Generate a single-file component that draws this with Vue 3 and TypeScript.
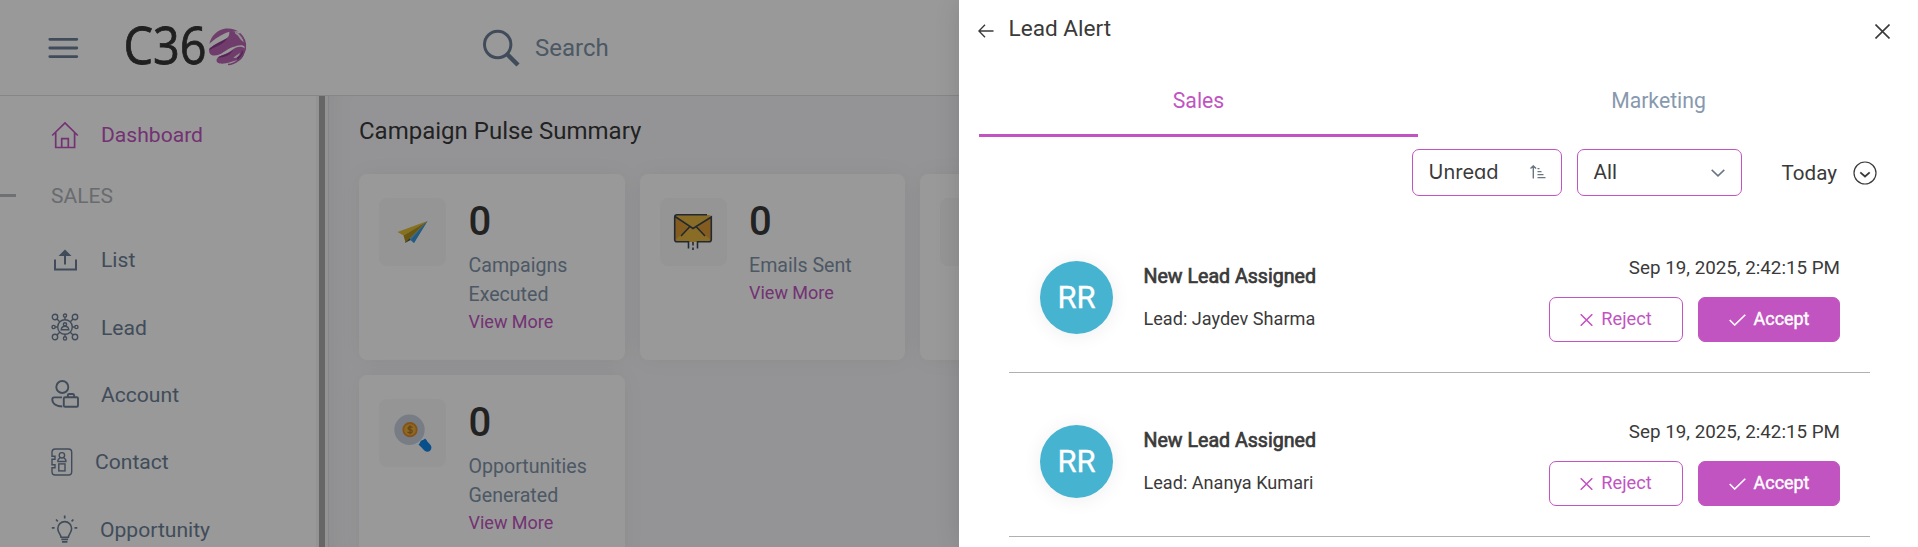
<script setup lang="ts">
interface NavItem {
  label: string
  icon: string
  width: number
}

interface Lead {
  initials: string
  name: string
  time: string
}

const navItems: NavItem[] = [
  { label: 'List', icon: 'list', width: 28 },
  { label: 'Lead', icon: 'lead', width: 28 },
  { label: 'Account', icon: 'account', width: 28 },
  { label: 'Contact', icon: 'contact', width: 22 },
  { label: 'Opportunity', icon: 'opportunity', width: 27 },
]

const cards = [
  { icon: 'plane', label: 'Campaigns Executed' },
  { icon: 'mail', label: 'Emails Sent' },
  { icon: '', label: '' },
  { icon: 'coin', label: 'Opportunities Generated' },
]

const leads: Lead[] = [
  { initials: 'RR', name: 'Jaydev Sharma', time: 'Sep 19, 2025, 2:42:15 PM' },
  { initials: 'RR', name: 'Ananya Kumari', time: 'Sep 19, 2025, 2:42:15 PM' },
]
</script>

<template>
  <div class="app">
    <header class="topbar">
      <svg class="burger" width="31" height="22" viewBox="0 0 31 22">
        <path d="M1.8 2.3H28.8M1.8 11H28.8M1.8 19.6H28.8" />
      </svg>
      <svg class="logo" width="128" height="80" viewBox="-4 -18 128 80">
        <text x="-1.500" y="39" textLength="83" lengthAdjust="spacingAndGlyphs">C36</text>
        <g transform="translate(84 3.300)">
          <path fill="#bb68b3" d="M.4 15.500C2 8 8.500 1.300 16.500.3 22-.4 27 1.500 29.500 3.200 24.500 2.600 20 3 15.500 5.200 9 8.300 4 12 .4 15.500Z" />
          <path fill="#b965b2" d="M0 21.500C5 15 12 13.500 18 9.600 21 7.500 20 5 20.500 3 28 1.500 36.600 9 36.800 19 33 15.500 29 17 24 18.700 16.500 21.200 13 27 5 27.300 1.500 27.200 0 25 0 21.500Z" />
          <path fill="#8a3f91" d="M.5 20C6 15.500 12 13.800 18.500 9.600 15 16 7 17.500.5 22Z" />
          <path fill="#b965b2" d="M7.500 31.500C9 27 17 27 23.500 21.500 27.500 18 33 17.500 36 20.500 36 25 33.500 30 29.500 32.500 27.500 30.500 23 34 17 35 11 36 7.300 35 7.500 31.500Z" />
          <path fill="#8a3f91" d="M8.500 29.200C13 26.500 19 26 24.500 21.500 21 27.500 15 29.500 8.500 29.200ZM28 29C31 28 33 25 33 22L35 25C34.500 28.500 32 31.500 29 33Z" />
          <path fill="#f6f0f6" d="M26 5 29 7.500C31 11 33 13 35 14 33.500 9 30 5 26 3.500ZM24.500 29.500C26 27.500 29 26.500 31 24.500 30 28.500 27 30.500 24.500 29.500Z" />
          <path fill="none" stroke="#b965b2" stroke-width="1.500" d="M19 36.300C26 36 34 30 36.300 20.500C37 15 35 9 30.500 5" />
        </g>
      </svg>
      <div class="search">
        <svg width="38" height="38" viewBox="0 0 38 38">
          <circle cx="15.700" cy="15.500" r="13.200" fill="none" stroke="#6d7f97" stroke-width="3" />
          <path d="M24.500 24.500 36 36" fill="none" stroke="#6d7f97" stroke-width="4.500" />
        </svg>
        <span>Search</span>
      </div>
    </header>

    <div class="body">
      <aside class="sidebar">
        <nav>
          <a class="nav-item active">
            <svg width="28" height="28" viewBox="0 0 28 28">
              <path d="M1.200 14.500 14 1.900 26.800 14.500M4.700 11.500V26.500H23.600V11.500M10.700 26.500V17.700H17.300V26.500" stroke-width="1.700" />
            </svg>
            <span>Dashboard</span>
          </a>
          <div class="section">SALES</div>
          <a v-for="item in navItems" :key="item.label" class="nav-item">
            <svg :width="item.width" height="28" :viewBox="`0 0 ${item.width} 28`">
              <template v-if="item.icon === 'list'">
                <path d="M4 13.500V23.500H25V13.500" stroke-width="2" />
                <path d="M14 18.500V8" stroke-width="2" />
                <path d="M14 3.500 20.500 10H7.500Z" class="solid" />
              </template>
              <template v-else-if="item.icon === 'lead'">
                <g stroke-width="1.400">
                  <circle cx="14" cy="14" r="7.300" />
                  <circle cx="14" cy="11.300" r="1.600" />
                  <path d="M10.200 16.700C10.500 14.400 12 13.300 14 13.300S17.500 14.400 17.800 16.700Z" />
                  <circle cx="4" cy="4" r="2.700" />
                  <circle cx="24" cy="4" r="2.700" />
                  <circle cx="4" cy="24" r="2.700" />
                  <circle cx="24" cy="24" r="2.700" />
                  <circle cx="14" cy="2.600" r="1.600" />
                  <circle cx="14" cy="25.400" r="1.600" />
                  <circle cx="2.600" cy="14" r="1.600" />
                  <circle cx="25.400" cy="14" r="1.600" />
                  <path d="M6 6 8.700 8.700M22 6 19.300 8.700M6 22 8.700 19.300M22 22 19.300 19.300M14 4.200V6.700M14 21.300V23.800M4.200 14H6.700M21.300 14H23.800" />
                </g>
              </template>
              <template v-else-if="item.icon === 'account'">
                <g stroke-width="1.900">
                  <circle cx="11.300" cy="7" r="6" />
                  <path d="M11 17.400H3.200C1.800 17.400 1.300 18.200 1.300 19.500 1.300 24 6 26.300 11.300 26.500" />
                  <rect x="12.800" y="17.300" width="14.200" height="9.500" rx="1.300" />
                  <path d="M16.800 17V15.500C16.800 14.500 17.300 14 18.300 14H21.600C22.600 14 23.100 14.500 23.100 15.500V17" />
                </g>
              </template>
              <template v-else-if="item.icon === 'contact'">
                <g stroke-width="1.400">
                  <path d="M1 8.200V4.200Q1 1 4.200 1H17.500Q20.700 1 20.700 4.200V23.800Q20.700 27 17.500 27H4.200Q1 27 1 23.800V19.800H4V16.800H1V11.200H4V8.200Z" />
                  <circle cx="10.900" cy="7.300" r="2.700" />
                  <path d="M6.700 13.300C6.700 11.300 8 10.300 9 9.800M15.100 13.300C15.100 11.300 13.800 10.300 12.800 9.800M6.300 13.500H15.500" />
                  <rect x="7.800" y="15.900" width="6.200" height="7" />
                </g>
              </template>
              <template v-else>
                <path d="M10 22.200C10 19.500 6.800 17.800 6.800 13.500A6.900 6.900 0 0 1 20.600 13.500C20.600 17.800 17.400 19.500 17.400 22.200Z" stroke-width="1.600" />
                <path d="M10.300 24.400H17.100M11 26.900H16.400M13.700.6V3.600M5 4.500 6.800 6.300M22.400 4.500 20.600 6.300M.8 12.900H3.600M23.500 12.900H26.300" stroke-width="1.700" />
              </template>
            </svg>
            <span>{{ item.label }}</span>
          </a>
        </nav>
        <div class="track"><div class="thumb"></div></div>
      </aside>

      <main class="content">
        <h1>Campaign Pulse Summary</h1>
        <div class="cards">
          <article v-for="(card, i) in cards" :key="i" class="card">
            <div class="card-icon">
              <svg v-if="card.icon === 'plane'" width="36" height="36" viewBox="0 0 36 36">
                <path fill="#5bb5ee" d="M32.500 7 19 29 13.500 25Z" />
                <path fill="#3e97d4" d="M32.500 7 16 25.500 19 29 22 24Z" />
                <path fill="#47525c" d="M10 29 13.500 22 15.500 26Z" />
                <path fill="#e0bd36" d="M2.500 18 32.500 7 8.500 21.500Z" />
                <path fill="#b5921c" d="M32.500 7 8.500 21.500 10.500 28.500Z" />
              </svg>
              <svg v-else-if="card.icon === 'mail'" width="40" height="40" viewBox="0 0 40 40">
                <rect x="2" y="3" width="36" height="27" rx="2" fill="#e4b53e" />
                <path fill="#dd9a36" d="M2 5 16 16 2 28ZM38 5 24 16 38 28Z" />
                <path class="mail-line" d="M34 2.700H4Q1.700 2.700 1.700 5V27.500Q1.700 29.800 4 29.800H15.500V36.500M24.500 36.500V29.800H36Q38.300 29.800 38.300 27.500V5L20 16.500 2 4.500M16.500 15 8 24M23.500 15 32 24" />
                <path class="mail-line" d="M20 30V38" stroke-dasharray="3.500 2" />
              </svg>
              <svg v-else-if="card.icon === 'coin'" width="42" height="42" viewBox="0 0 42 42">
                <circle cx="17.500" cy="17.700" r="15.200" fill="#c9cfde" />
                <circle cx="18" cy="17.700" r="6.700" fill="#e9b040" stroke="#e08a22" stroke-width="1.800" />
                <path d="M20.500 15.500Q18 13.700 16.300 15.400 15.500 17.200 18 17.700 21 18.400 20 20.200 18 21.700 15.500 20M18 13.200V22.200" fill="none" stroke="#af7420" stroke-width="1.300" />
                <path d="M32 32 35.200 35.500" stroke="#0f86e8" stroke-width="8.500" stroke-linecap="round" />
                <path d="M27.500 33.500 34 27.500" stroke="#0f86e8" stroke-width="3" />
              </svg>
            </div>
            <div v-if="card.label" class="card-body">
              <strong>0</strong>
              <p>{{ card.label }}</p>
              <a>View More</a>
            </div>
          </article>
        </div>
      </main>
    </div>

    <div class="backdrop"></div>

    <section class="drawer">
      <div class="drawer-head">
        <svg class="back" width="16" height="14" viewBox="0 0 16 14">
          <path d="M15.500 7H1M7 .8.900 7 7 13.200" />
        </svg>
        <h2>Lead Alert</h2>
        <svg class="close" width="15" height="15" viewBox="0 0 15 15">
          <path d="M.5.500 14.500 14.500M14.500.500.500 14.500" />
        </svg>
      </div>

      <div class="tabs">
        <button class="tab selected">Sales</button>
        <button class="tab">Marketing</button>
      </div>

      <div class="filters">
        <div class="select unread">
          <span>Unread</span>
          <svg width="16" height="14" viewBox="0 0 16 14">
            <path d="M3.300 13.500V1M.500 3.600 3.300.900 6.100 3.600M7.500 3.600H9.500M7.500 6.600H11.500M7.500 9.600H13.500M7.500 12.600H15.500" stroke-width="1.400" />
          </svg>
        </div>
        <div class="select all">
          <span>All</span>
          <svg width="14" height="8" viewBox="0 0 14 8">
            <path d="M.7.900 7 6.900 13.300.900" stroke-width="1.500" />
          </svg>
        </div>
        <div class="today">
          <span>Today</span>
          <svg width="24" height="24" viewBox="0 0 24 24">
            <circle cx="12" cy="12" r="11" stroke-width="1.200" />
            <path d="M7.300 11.300 12 15.500 16.700 11.300" stroke-width="1.800" />
          </svg>
        </div>
      </div>

      <ul class="leads">
        <li v-for="lead in leads" :key="lead.name">
          <div class="avatar">{{ lead.initials }}</div>
          <div class="info">
            <h3>New Lead Assigned</h3>
            <p>Lead: {{ lead.name }}</p>
          </div>
          <div class="side">
            <time>{{ lead.time }}</time>
            <div class="actions">
              <button class="reject">
                <svg width="13" height="12" viewBox="0 0 13 12"><path d="M.700.300 12.300 11.700M12.300.300.700 11.700" /></svg>
                <span>Reject</span>
              </button>
              <button class="accept">
                <svg width="17" height="12" viewBox="0 0 17 12"><path d="M.700 6 5.700 11 16.300.700" /></svg>
                <span>Accept</span>
              </button>
            </div>
          </div>
        </li>
      </ul>
    </section>
  </div>
</template>

<style>
body {
  margin: 0;
  overflow: hidden;
}
</style>

<style scoped>
.app {
  position: relative;
  width: 1918px;
  height: 547px;
  overflow: hidden;
  background: #fff;
  color: #3a3a3a;
  font-family: Roboto, sans-serif;
}
.app * {
  box-sizing: border-box;
}
svg {
  display: block;
  flex: none;
}
h1,
h2,
h3,
p,
ul {
  margin: 0;
  padding: 0;
  font-weight: 400;
}
button {
  border: 0;
  background: none;
  padding: 0;
  font-family: inherit;
}

.topbar {
  display: flex;
  align-items: center;
  height: 96px;
  padding-left: 48px;
  border-bottom: 1px solid #e0e0e0;
}
.burger path {
  stroke: #6d7f97;
  stroke-width: 2.8;
  stroke-linecap: round;
}
.logo {
  margin: -2px 0 0 42px;
  overflow: visible;
}
.logo text {
  font: 52px 'Open Sans', sans-serif;
  fill: #363636;
  stroke: #363636;
  stroke-width: 0.8px;
}
.search {
  display: flex;
  align-items: center;
  gap: 15px;
  margin-left: 233px;
  font-size: 24px;
  color: #8093a9;
}

.body {
  display: flex;
  height: 451px;
}
.sidebar {
  display: flex;
  justify-content: space-between;
  width: 329px;
  flex: none;
  border-right: 1px solid #e2e2e2;
}
nav {
  flex: 1;
  padding-top: 5px;
}
.nav-item {
  display: flex;
  align-items: center;
  gap: 22px;
  height: 67.4px;
  padding-left: 51px;
  font-size: 21.1px;
  color: #6d7f97;
}
.nav-item svg {
  fill: none;
  stroke: currentColor;
}
.nav-item .solid {
  fill: currentColor;
  stroke: none;
}
.nav-item.active {
  height: 68px;
  color: #c154c1;
}
.nav-item.active span {
  margin-top: -2px;
}
.section {
  display: flex;
  align-items: center;
  height: 53px;
  margin-bottom: 4px;
  font-size: 21px;
  color: #afb3ba;
}
.section::before {
  content: '';
  width: 16px;
  height: 3px;
  margin-right: 35px;
  background: #b8bbc0;
}
.track {
  width: 12px;
  padding-left: 3px;
  background: #f6f6f6;
}
.thumb {
  width: 6px;
  height: 100%;
  background: #aaa;
}

.content {
  flex: 1;
  padding: 19px 0 0 30px;
  background: #f7f7fa;
  box-shadow: inset 24px 0 24px -20px rgba(0, 0, 0, 0.05);
}
h1 {
  font-size: 24px;
  line-height: 32px;
}
.cards {
  display: grid;
  grid-template-columns: repeat(3, 265.5px);
  grid-auto-rows: 186px;
  gap: 15px;
  margin-top: 27px;
}
.card {
  display: flex;
  align-items: flex-start;
  gap: 22.5px;
  padding: 22px 20px 0;
  background: #fff;
  border-radius: 8px;
  box-shadow: 0 0 22px rgba(0, 0, 0, 0.05);
}
.card-icon {
  display: flex;
  align-items: center;
  justify-content: center;
  flex: none;
  width: 67px;
  height: 68px;
  margin-top: 2px;
  border-radius: 8px;
  background: #f9f9f9;
}
.mail-line {
  fill: none;
  stroke: #3d4450;
  stroke-width: 1.6;
}
.card-body {
  width: 130px;
}
.card-body strong {
  display: block;
  height: 50px;
  margin-bottom: 5px;
  font-size: 40px;
  line-height: 52px;
  font-weight: 500;
}
.card-body p {
  font-size: 19.6px;
  line-height: 29px;
  color: #8093a9;
}
.card-body a {
  display: block;
  font-size: 18px;
  line-height: 26px;
  color: #c154c1;
}

.backdrop {
  position: absolute;
  inset: 0;
  background: rgba(0, 0, 0, 0.4);
}

.drawer {
  position: absolute;
  top: 0;
  right: 0;
  width: 959px;
  height: 547px;
  overflow: hidden;
  background: #fff;
  box-shadow: 0 0 24px rgba(0, 0, 0, 0.12);
}
.drawer-head {
  display: flex;
  height: 66px;
  padding: 12px 28px 0 19px;
}
.drawer-head svg {
  fill: none;
  stroke: #3a3a3a;
  stroke-width: 1.4;
}
.back {
  margin-top: 12px;
}
.drawer-head h2 {
  margin-left: 14.5px;
  font-size: 22.6px;
  line-height: 33px;
}
.drawer-head .close {
  margin: 12px 0 0 auto;
  stroke-width: 1.6;
}
.tabs {
  display: flex;
  gap: 21px;
  padding-left: 20px;
}
.tab {
  width: 439px;
  height: 71px;
  border-bottom: 3px solid transparent;
  font-size: 21.2px;
  line-height: 70px;
  color: #8799ae;
}
.tab.selected {
  color: #c154c1;
  border-color: #c154c1;
}
.filters {
  display: flex;
  justify-content: flex-end;
  align-items: center;
  margin-top: 12px;
  padding-right: 41px;
}
.select {
  display: flex;
  align-items: center;
  justify-content: space-between;
  height: 47px;
  margin-right: 15px;
  border: 1px solid #c154c1;
  border-radius: 7px;
}
.select svg {
  fill: none;
  stroke: #6b7685;
}
.unread {
  width: 150px;
  padding: 0 15px 2px 16px;
  font: 20px Inter, sans-serif;
  font-feature-settings: 'cv11';
}
.all {
  width: 165px;
  padding: 0 16px 0 16px;
  margin-right: 40px;
  font-size: 20.6px;
}
.all span {
  margin-top: -2px;
}
.today {
  display: flex;
  align-items: center;
  gap: 16px;
  font-size: 20.6px;
}
.today svg {
  fill: none;
  stroke: #3a3a3a;
}

.leads {
  margin: 13px 48px 0 50px;
  list-style: none;
}
li {
  display: flex;
  align-items: flex-start;
  height: 164px;
  padding: 45px 30px 0 31px;
  border-bottom: 1px solid #b0b0b0;
}
.avatar {
  width: 73px;
  height: 73px;
  margin-top: 7px;
  border-radius: 50%;
  background: #46b3d1;
  box-shadow: 0 2px 20px rgba(0, 0, 0, 0.07);
  color: #fff;
  font-size: 31px;
  font-weight: 400;
  line-height: 73px;
  text-align: center;
  -webkit-text-stroke: 0.3px #fff;
}
.info {
  margin: 8px 0 0 30.5px;
}
.info h3 {
  font-size: 19.6px;
  line-height: 30px;
  -webkit-text-stroke: 0.7px #3a3a3a;
}
.info p {
  margin-top: 14px;
  font-size: 18.1px;
  line-height: 26px;
}
.side {
  display: flex;
  flex-direction: column;
  margin-left: auto;
}
time {
  font-size: 18.8px;
  line-height: 28px;
  text-align: right;
}
.actions {
  display: flex;
  gap: 15px;
  margin-top: 15px;
}
.actions button {
  display: flex;
  align-items: center;
  justify-content: center;
  gap: 8px;
  height: 45px;
  border: 1px solid #c154c1;
  border-radius: 7px;
  font-size: 18.2px;
}
.actions span {
  margin-top: -2px;
}
.actions svg {
  fill: none;
  stroke: currentColor;
  stroke-width: 1.6;
}
.actions .reject {
  width: 134px;
  color: #c154c1;
}
.actions .accept {
  width: 142px;
  background: #c154c1;
  color: #fff;
  font-size: 17.9px;
  -webkit-text-stroke: 0.4px #fff;
}
</style>
